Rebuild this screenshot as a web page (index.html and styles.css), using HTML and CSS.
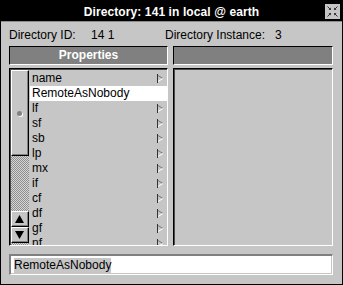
FILE: index.html
```html
<!DOCTYPE html>
<html>
<head>
<meta charset="utf-8">
<link rel="stylesheet" href="styles.css">
</head>
<body>
<div class="win">
  <div class="titlebar">
    <span class="title">Directory: 141 in local @ earth</span>
    <div class="close">
      <svg width="15" height="15" viewBox="0 0 15 15">
        <g stroke="#333" stroke-width="1" fill="none">
          <path d="M2.5 2.5 L5.5 5.5"/><path d="M12.5 2.5 L9.5 5.5"/>
          <path d="M2.5 12.5 L5.5 9.5"/><path d="M12.5 12.5 L9.5 9.5"/>
        </g>
        <g fill="#333">
          <path d="M6 6 L3.5 6 L6 3.5 Z"/><path d="M9 6 L11.5 6 L9 3.5 Z"/>
          <path d="M6 9 L3.5 9 L6 11.5 Z"/><path d="M9 9 L11.5 9 L9 11.5 Z"/>
        </g>
      </svg>
    </div>
  </div>
  <div class="content">
    <div class="info">
      <span class="lbl-id">Directory ID:</span>
      <span class="val-id">14 1</span>
      <span class="lbl-inst">Directory Instance:</span>
      <span class="val-inst">3</span>
    </div>
    <div class="cols">
      <div class="col">
        <div class="hdr">Properties</div>
        <div class="panel">
          <div class="scroll">
            <div class="thumb"><span class="dot"></span></div>
            <div class="trough"></div>
            <div class="sbtn"><svg width="9" height="8" viewBox="0 0 9 8"><path d="M4.5 0 L9 8 L0 8 Z" fill="#000"/></svg></div>
            <div class="sbtn"><svg width="9" height="8" viewBox="0 0 9 8"><path d="M0 0 L9 0 L4.5 8 Z" fill="#000"/></svg></div>
            <div class="tail"></div>
          </div>
          <ul class="items">
            <li><span>name</span><svg class="flag" width="7" height="9" viewBox="0 0 7 9"><path d="M0.5 0 V9" stroke="#333"/><path d="M1 1.5 L6 4.5" stroke="#777"/><path d="M6 4.5 L1 7.5" stroke="#fff"/></svg></li>
            <li class="sel"><span>RemoteAsNobody</span></li>
            <li><span>lf</span><svg class="flag" width="7" height="9" viewBox="0 0 7 9"><path d="M0.5 0 V9" stroke="#333"/><path d="M1 1.5 L6 4.5" stroke="#777"/><path d="M6 4.5 L1 7.5" stroke="#fff"/></svg></li>
            <li><span>sf</span><svg class="flag" width="7" height="9" viewBox="0 0 7 9"><path d="M0.5 0 V9" stroke="#333"/><path d="M1 1.5 L6 4.5" stroke="#777"/><path d="M6 4.5 L1 7.5" stroke="#fff"/></svg></li>
            <li><span>sb</span><svg class="flag" width="7" height="9" viewBox="0 0 7 9"><path d="M0.5 0 V9" stroke="#333"/><path d="M1 1.5 L6 4.5" stroke="#777"/><path d="M6 4.5 L1 7.5" stroke="#fff"/></svg></li>
            <li><span>lp</span><svg class="flag" width="7" height="9" viewBox="0 0 7 9"><path d="M0.5 0 V9" stroke="#333"/><path d="M1 1.5 L6 4.5" stroke="#777"/><path d="M6 4.5 L1 7.5" stroke="#fff"/></svg></li>
            <li><span>mx</span><svg class="flag" width="7" height="9" viewBox="0 0 7 9"><path d="M0.5 0 V9" stroke="#333"/><path d="M1 1.5 L6 4.5" stroke="#777"/><path d="M6 4.5 L1 7.5" stroke="#fff"/></svg></li>
            <li><span>if</span><svg class="flag" width="7" height="9" viewBox="0 0 7 9"><path d="M0.5 0 V9" stroke="#333"/><path d="M1 1.5 L6 4.5" stroke="#777"/><path d="M6 4.5 L1 7.5" stroke="#fff"/></svg></li>
            <li><span>cf</span><svg class="flag" width="7" height="9" viewBox="0 0 7 9"><path d="M0.5 0 V9" stroke="#333"/><path d="M1 1.5 L6 4.5" stroke="#777"/><path d="M6 4.5 L1 7.5" stroke="#fff"/></svg></li>
            <li><span>df</span><svg class="flag" width="7" height="9" viewBox="0 0 7 9"><path d="M0.5 0 V9" stroke="#333"/><path d="M1 1.5 L6 4.5" stroke="#777"/><path d="M6 4.5 L1 7.5" stroke="#fff"/></svg></li>
            <li><span>gf</span><svg class="flag" width="7" height="9" viewBox="0 0 7 9"><path d="M0.5 0 V9" stroke="#333"/><path d="M1 1.5 L6 4.5" stroke="#777"/><path d="M6 4.5 L1 7.5" stroke="#fff"/></svg></li>
            <li><span>nf</span><svg class="flag" width="7" height="9" viewBox="0 0 7 9"><path d="M0.5 0 V9" stroke="#333"/><path d="M1 1.5 L6 4.5" stroke="#777"/><path d="M6 4.5 L1 7.5" stroke="#fff"/></svg></li>
          </ul>
        </div>
      </div>
      <div class="col">
        <div class="hdr"></div>
        <div class="panel"></div>
      </div>
    </div>
    <div class="field"><span class="seltext">RemoteAsNobody</span></div>
  </div>
</div>
</body>
</html>
```
FILE: styles.css
```css
* { box-sizing: border-box; }
html, body { margin: 0; padding: 0; background: #c6c6c6; }
body { font-family: "Liberation Sans", Arial, sans-serif; font-size: 12px; color: #000; }

.win {
  width: 343px; height: 285px;
  border: 1px solid #000;
  background: #c6c6c6;
  display: flex; flex-direction: column;
}
.titlebar {
  position: relative;
  height: 21px;
  background: #000;
  border-bottom: 1px solid #8c8c8c;
  text-align: center;
  line-height: 20px;
  padding-top: 1px;
}
.title { color: #fff; font-weight: bold; font-size: 12px; letter-spacing: 0.1px; }
.close {
  position: absolute; right: 2px; top: 3px;
  width: 15px; height: 15px;
  background: #c6c6c6;
}
.close svg { display: block; }

.content { padding: 6px 9px 0 8px; display: flex; flex-direction: column; }
.info { display: flex; height: 14px; line-height: 14px; }
.lbl-id { width: 82px; }
.val-id { width: 74px; }
.lbl-inst { width: 110px; }

.cols { display: grid; grid-template-columns: 159px 160px; column-gap: 5px; margin-top: 4px; }
.col { display: flex; flex-direction: column; }
.hdr {
  height: 19px;
  background: #808080;
  border: 1px solid; border-color: #000 #fff #fff #000;
  color: #fff; font-weight: bold; text-align: center; line-height: 17px;
}
.panel {
  margin-top: 3px;
  height: 178px;
  border: 1px solid; border-color: #000 #fff #fff #000;
  box-shadow: inset 1px 1px 0 #4a4a4a;
  padding: 1px 0 0 1px;
  display: flex;
  overflow: hidden;
}
.scroll { width: 18px; display: flex; flex-direction: column; flex: none; }
.thumb, .sbtn {
  border: 1px solid; border-color: #fff #000 #000 #fff;
  box-shadow: inset -1px -1px 0 #808080;
  background: #c6c6c6;
}
.thumb { height: 86px; display: flex; align-items: center; justify-content: center; padding-right: 2px; padding-top: 1px; }
.dot {
  width: 5px; height: 5px; border-radius: 50%;
  background: #808080;
  box-shadow: 1px 1px 0 #fff;
}
.trough, .tail {
  background: repeating-conic-gradient(#8e8e8e 0 25%, #d6d6d6 0 50%) 0 0 / 2px 2px;
}
.trough { height: 55px; }
.tail { flex: 1; }
.sbtn { height: 16px; display: flex; align-items: center; justify-content: center; padding-right: 1px; }
.sbtn svg { display: block; }

.items { list-style: none; margin: 1px 0 0 1px; padding: 0; flex: 1; }
.items li {
  height: 15px; line-height: 15px;
  padding: 0 3px 0 2px;
  display: flex; justify-content: space-between; align-items: center;
  white-space: nowrap;
}
.items li.sel { background: #fff; }
.flag { display: block; }

.field {
  margin-top: 8px;
  height: 21px;
  border: 1px solid; border-color: #808080 #fff #fff #808080;
  border-width: 2px 1px 1px 2px;
  box-shadow: inset -1px -1px 0 #c6c6c6;
  background: #fff;
  padding: 2px 0 0 3px;
  line-height: 15px;
}
.seltext { background: #c6c6c6; display: inline-block; height: 15px; }
```
